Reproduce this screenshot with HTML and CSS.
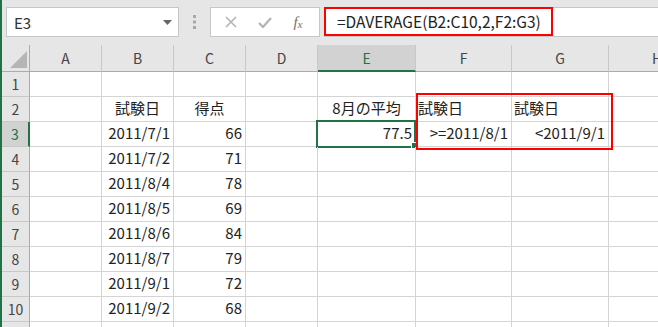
FILE: index.html
```html
<!DOCTYPE html>
<html lang="ja">
<head>
    <meta charset="UTF-8">
    <title>DAVERAGE</title>
    <link rel="stylesheet" href="styles.css">
</head>
<body>
    <div class="app">
        <div class="toolbar">
            <div class="namebox">
                <span>E3</span>
                <svg width="9" height="5" viewBox="0 0 9 5"><polygon points="0,0 9,0 4.5,5" fill="#666"/></svg>
            </div>
            <div class="grip">
                <svg width="3" height="14" viewBox="0 0 3 14"><rect x="0" y="0" width="3" height="3" fill="#a8a8a8"/><rect x="0" y="5.5" width="3" height="3" fill="#a8a8a8"/><rect x="0" y="11" width="3" height="3" fill="#a8a8a8"/></svg>
            </div>
            <div class="fbtns">
                <svg class="ico" width="12" height="12" viewBox="0 0 12 12"><path d="M1 1 L11 11 M11 1 L1 11" stroke="#b3b3b3" stroke-width="1.6" fill="none"/></svg>
                <svg class="ico" width="14" height="11" viewBox="0 0 14 11"><path d="M1 6 L5 10 L13 1" stroke="#b3b3b3" stroke-width="2.2" fill="none"/></svg>
                <span class="fx">f<sub>x</sub></span>
            </div>
            <div class="formula">
                <span class="hl">=DAVERAGE(B2:C10,2,F2:G3)</span>
            </div>
        </div>
        <div class="sheet" id="sheet">
            <div class="crit"></div>
        </div>
    </div>

    <script>
        const cols = ['A', 'B', 'C', 'D', 'E', 'F', 'G', 'H'];
        // row -> column -> [text, alignment]
        const data = {
            2: { B: ['試験日', 'c'], C: ['得点', 'c'], E: ['8月の平均', 'c'], F: ['試験日', 'l'], G: ['試験日', 'l'] },
            3: { B: ['2011/7/1', 'r'], C: ['66', 'r'], E: ['77.5', 'r'], F: ['>=2011/8/1', 'r'], G: ['<2011/9/1', 'r'] },
            4: { B: ['2011/7/2', 'r'], C: ['71', 'r'] },
            5: { B: ['2011/8/4', 'r'], C: ['78', 'r'] },
            6: { B: ['2011/8/5', 'r'], C: ['69', 'r'] },
            7: { B: ['2011/8/6', 'r'], C: ['84', 'r'] },
            8: { B: ['2011/8/7', 'r'], C: ['79', 'r'] },
            9: { B: ['2011/9/1', 'r'], C: ['72', 'r'] },
            10: { B: ['2011/9/2', 'r'], C: ['68', 'r'] }
        };

        const sheet = document.getElementById('sheet');

        function cell(cls, text) {
            const div = document.createElement('div');
            div.className = cls;
            if (text) div.textContent = text;
            sheet.appendChild(div);
            return div;
        }

        // corner + column headers
        const corner = cell('corner');
        corner.innerHTML = '<svg width="17" height="17" viewBox="0 0 17 17"><polygon points="17,0 17,17 0,17" fill="#b5b5b5"/></svg>';
        cols.forEach(c => cell(c === 'E' ? 'colhead sel' : 'colhead', c));

        // row 11 is only a sliver at the bottom edge, its number is out of view
        for (let r = 1; r <= 11; r++) {
            cell(r === 3 ? 'rowhead sel' : 'rowhead', r <= 10 ? String(r) : '');
            cols.forEach(c => {
                const d = data[r] && data[r][c];
                const div = cell(d ? 'cell ' + d[1] : 'cell', d ? d[0] : '');
                if (r === 3 && c === 'E') {
                    div.innerHTML += '<div class="cursor"></div><div class="handle"></div>';
                }
            });
        }
    </script>
</body>
</html>
```

FILE: styles.css
```css
body {
    margin: 0;
    overflow: hidden;
    background-color: #fff;
    font-family: "Noto Sans CJK JP", "Noto Sans", sans-serif;
    color: #222;
}
.app {
    border-left: 2px solid #217346;
    height: 327px;
    overflow: hidden;
}
.toolbar {
    display: flex;
    align-items: flex-start;
    height: 45px;
    padding-top: 7px;
    box-sizing: border-box;
    background-color: #e6e6e6;
}
.namebox {
    margin-left: 4px;
    width: 173px;
    height: 30px;
    box-sizing: border-box;
    border: 1px solid #c6c6c6;
    background-color: #fff;
    display: flex;
    align-items: center;
    justify-content: space-between;
    padding: 0 6px 0 7px;
    font-size: 15px;
    color: #333;
}
.grip {
    width: 31px;
    height: 30px;
    display: flex;
    align-items: center;
    justify-content: center;
}
.fbtns {
    width: 110px;
    height: 30px;
    box-sizing: border-box;
    border: 1px solid #c6c6c6;
    background-color: #fff;
    display: flex;
    align-items: center;
    justify-content: space-around;
    padding: 0 6px 0 4px;
}
.fx {
    font-family: "Liberation Serif", serif;
    font-style: italic;
    font-size: 15px;
    color: #707070;
}
.fx sub {
    font-size: 11px;
    vertical-align: -1px;
}
.formula {
    flex: 1;
    margin-left: 4px;
    height: 30px;
    box-sizing: border-box;
    border: 1px solid #c6c6c6;
    border-right: none;
    background-color: #fff;
}
.hl {
    display: inline-block;
    height: 29px;
    box-sizing: border-box;
    margin: -1px 0 0 -1px;
    border: 2px solid #ff0000;
    padding: 0 10px 0 11px;
    line-height: 25px;
    font-size: 15.5px;
    color: #222;
}
.sheet {
    position: relative;
    display: grid;
    grid-template-columns: 28px 72px 72px 72px 72px 98px 96px 97px 97px;
    grid-template-rows: 27px repeat(11, 25px);
}
.corner, .colhead, .rowhead {
    background-color: #e6e6e6;
    box-sizing: border-box;
    color: #444;
    font-size: 14px;
}
.corner {
    border-right: 1px solid #ababab;
    border-bottom: 1px solid #ababab;
    display: flex;
    align-items: flex-end;
    justify-content: flex-end;
    padding: 0 2px 3px 0;
}
.colhead {
    border-right: 1px solid #c8c8c8;
    border-bottom: 1px solid #ababab;
    text-align: center;
    line-height: 26px;
}
.colhead.sel {
    background-color: #d2d2d2;
    color: #217346;
    border-bottom: 2px solid #217346;
}
.rowhead {
    border-right: 1px solid #ababab;
    border-bottom: 1px solid #c8c8c8;
    text-align: center;
    line-height: 24px;
}
.rowhead.sel {
    background-color: #d2d2d2;
    color: #217346;
    border-right: 2px solid #217346;
}
.cell {
    position: relative;
    box-sizing: border-box;
    border-right: 1px solid #d4d4d4;
    border-bottom: 1px solid #d4d4d4;
    padding: 0 3px;
    font-size: 15px;
    line-height: 21px;
    white-space: nowrap;
}
.cell.r {
    text-align: right;
}
.cell.c {
    text-align: center;
}
.cell.l {
    text-align: left;
    padding-left: 2px;
}
.cursor {
    position: absolute;
    left: -2px;
    top: -2px;
    width: 100px;
    height: 28px;
    box-sizing: border-box;
    border: 2px solid #217346;
}
.handle {
    position: absolute;
    right: -3px;
    bottom: -3px;
    width: 5px;
    height: 5px;
    background-color: #217346;
    border: 1px solid #fff;
}
.crit {
    position: absolute;
    left: 414px;
    top: 48px;
    width: 197px;
    height: 57px;
    box-sizing: border-box;
    border: 2px solid #ff0000;
    z-index: 2;
}
```
